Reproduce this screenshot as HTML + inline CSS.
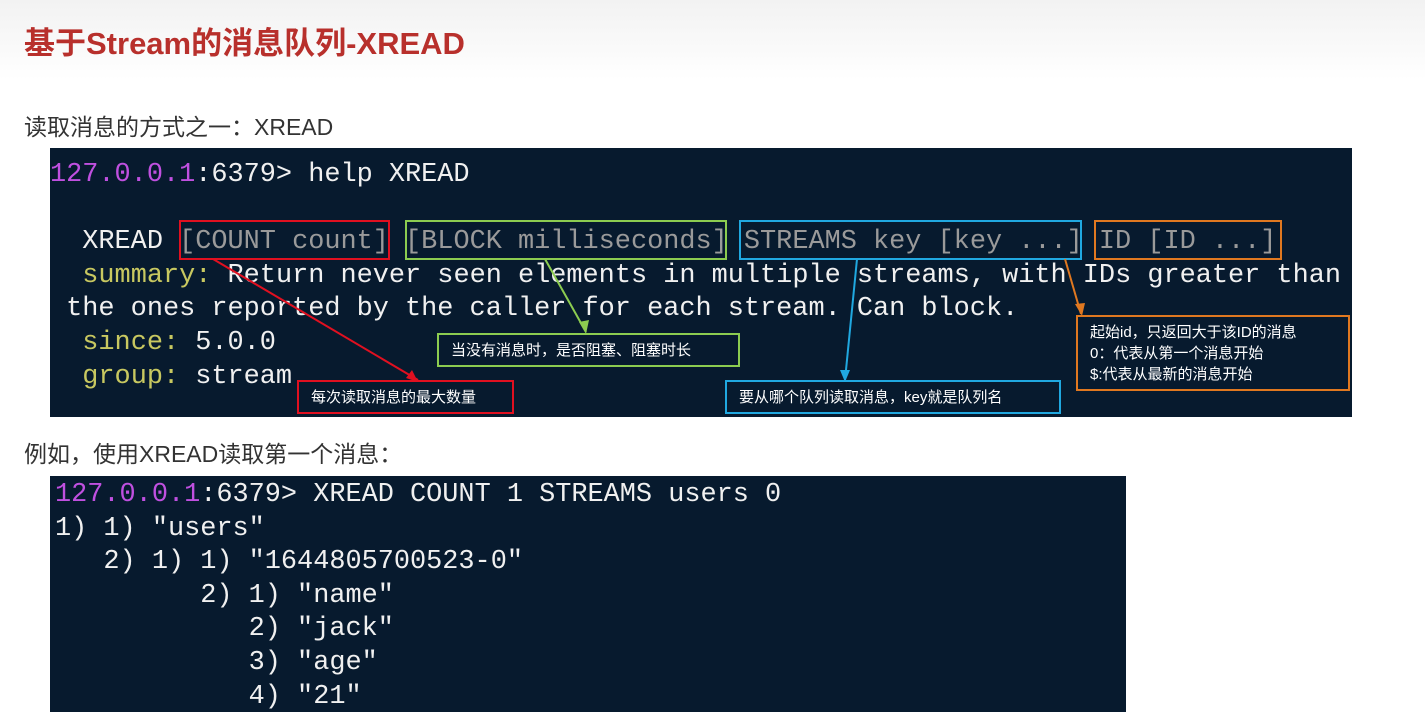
<!DOCTYPE html>
<html><head><meta charset="utf-8"><style>
body{margin:0;width:1425px;height:727px;background:#fff;position:relative;overflow:hidden;font-family:"Liberation Sans","Noto Sans CJK SC",sans-serif}
.hdr{position:absolute;left:0;top:0;width:1425px;height:80px;background:linear-gradient(#f2f2f2,#fff)}
.t{position:absolute;left:24px;top:18px;font-size:31px;font-weight:bold;color:#b8302c}
.p{position:absolute;left:24px;font-size:23px;color:#333}
.term{position:absolute;background:#071a2e}
.mono{position:absolute;font-family:"Liberation Mono","Noto Sans CJK SC",monospace;font-size:26.9px;color:#f0f0f0;white-space:pre;line-height:33.6px}
.m{color:#c050e0}.y{color:#c8c860}.g{color:#9a9a9a}
.box{position:absolute;border:2px solid;box-sizing:border-box}
.lab{position:absolute;border:2px solid;box-sizing:border-box;background:#071a2e;color:#fff;font-size:15px;padding:0 12px;display:flex;align-items:center;white-space:pre;line-height:21px}
</style></head><body>
<div class="hdr"></div>
<div class="t">基于Stream的消息队列-XREAD</div>
<div class="p" style="top:108px">读取消息的方式之一：XREAD</div>
<div class="term" style="left:50px;top:148px;width:1302px;height:269px"></div>
<div class="mono" style="left:50px;top:159px"><span class="m">127.0.0.1</span>:6379&gt; help XREAD

  XREAD <span class="g">[COUNT count] [BLOCK milliseconds] STREAMS key [key ...] ID [ID ...]</span>
  <span class="y">summary:</span> Return never seen elements in multiple streams, with IDs greater than
 the ones reported by the caller for each stream. Can block.
  <span class="y">since:</span> 5.0.0
  <span class="y">group:</span> stream</div>
<div class="box" style="left:179px;top:220px;width:211px;height:40px;border-color:#e01020"></div>
<div class="box" style="left:405px;top:220px;width:322px;height:40px;border-color:#8ccc50"></div>
<div class="box" style="left:739px;top:220px;width:343px;height:40px;border-color:#20a8e0"></div>
<div class="box" style="left:1094px;top:220px;width:188px;height:40px;border-color:#e07820"></div>
<svg style="position:absolute;left:0;top:0" width="1425" height="727">
<g stroke-width="2" fill="none">
<line x1="213" y1="259" x2="418" y2="380" stroke="#e01020"/>
<line x1="545" y1="259" x2="586" y2="332" stroke="#8ccc50"/>
<line x1="857" y1="259" x2="845" y2="380" stroke="#20a8e0"/>
<line x1="1065" y1="259" x2="1081" y2="314" stroke="#e07820"/>
</g>
<polygon points="418,382 406,378 412,370" fill="#e01020"/>
<polygon points="586,334 579,322 589,320" fill="#8ccc50"/>
<polygon points="845,382 840,370 850,370" fill="#20a8e0"/>
<polygon points="1082,316 1075,304 1085,303" fill="#e07820"/>
</svg>
<div class="lab" style="left:297px;top:380px;width:217px;height:34px;border-color:#e01020">每次读取消息的最大数量</div>
<div class="lab" style="left:437px;top:333px;width:303px;height:34px;border-color:#8ccc50">当没有消息时，是否阻塞、阻塞时长</div>
<div class="lab" style="left:725px;top:380px;width:336px;height:34px;border-color:#20a8e0">要从哪个队列读取消息，key就是队列名</div>
<div class="lab" style="left:1076px;top:315px;width:274px;height:76px;border-color:#e07820;align-items:center">起始id，只返回大于该ID的消息
0：代表从第一个消息开始
$:代表从最新的消息开始</div>
<div class="p" style="top:435px">例如，使用XREAD读取第一个消息：</div>
<div class="term" style="left:50px;top:476px;width:1076px;height:236px"></div>
<div class="mono" style="left:55px;top:479px;font-size:26.9px"><span class="m">127.0.0.1</span>:6379&gt; XREAD COUNT 1 STREAMS users 0
1) 1) "users"
   2) 1) 1) "1644805700523-0"
         2) 1) "name"
            2) "jack"
            3) "age"
            4) "21"</div>
</body></html>
